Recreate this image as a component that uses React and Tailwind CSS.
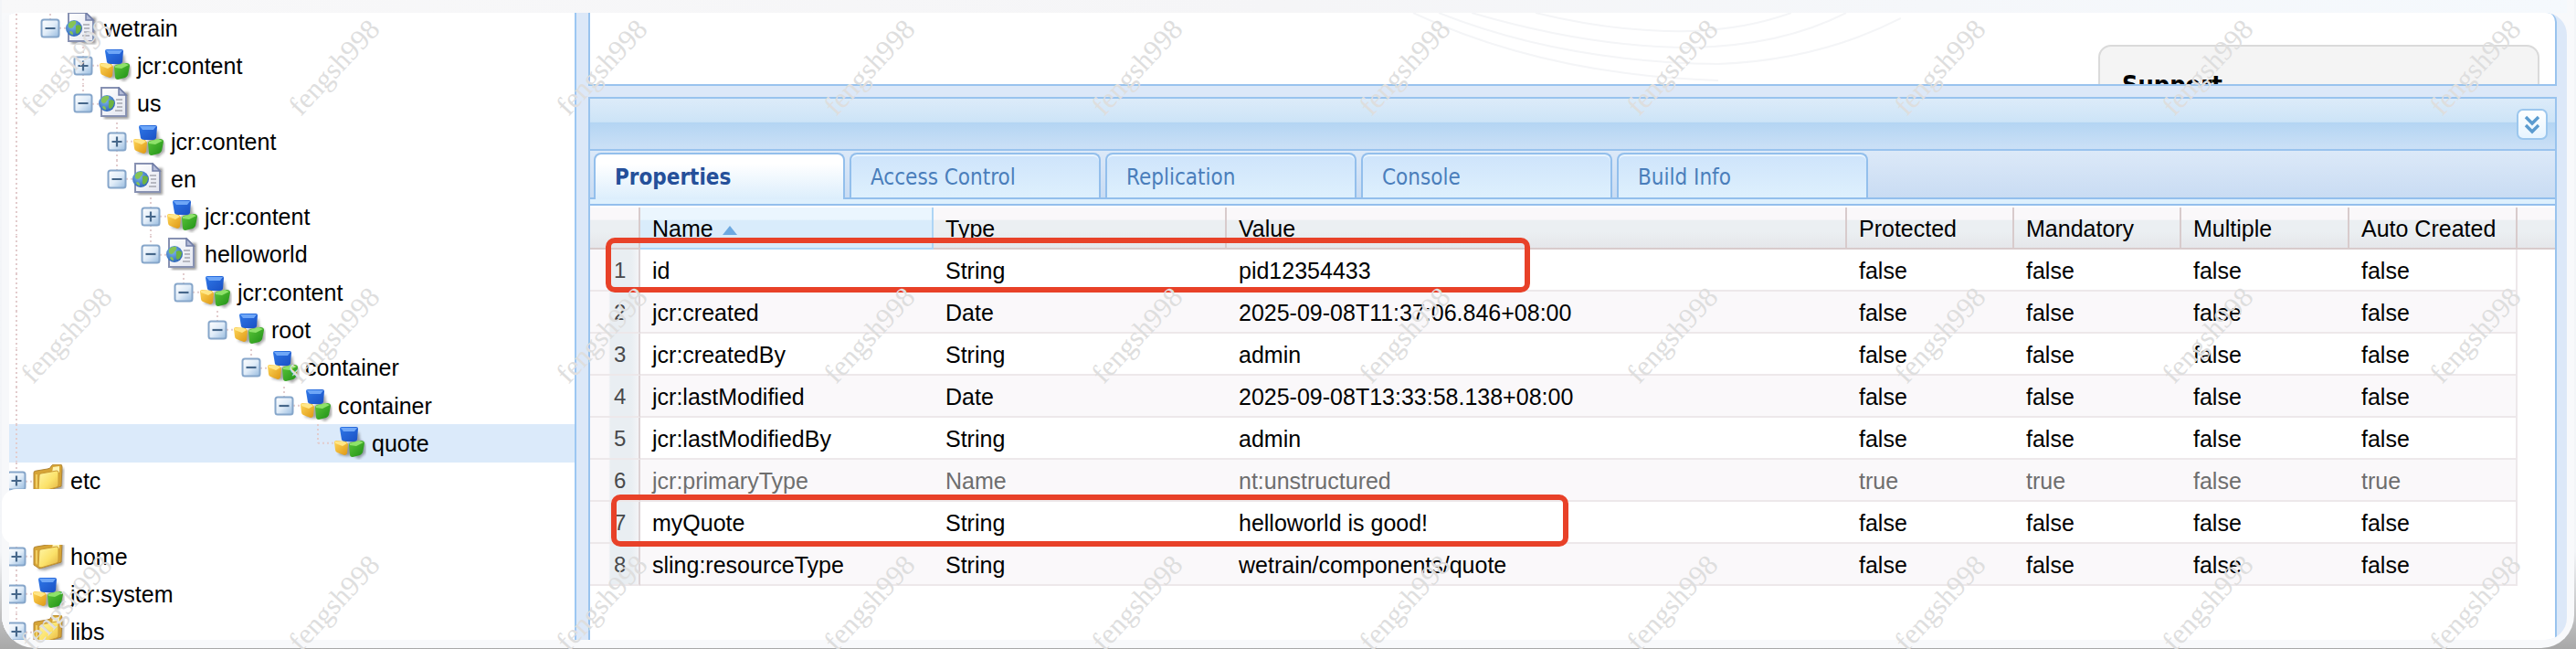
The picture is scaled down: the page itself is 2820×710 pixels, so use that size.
import React from "react";

const tree = [
  { label: "wetrain", level: 1, icon: "page", open: true, last: true },
  { label: "jcr:content", level: 2, icon: "cubes" },
  { label: "us", level: 2, icon: "page", open: true, last: true },
  { label: "jcr:content", level: 3, icon: "cubes" },
  { label: "en", level: 3, icon: "page", open: true, last: true },
  { label: "jcr:content", level: 4, icon: "cubes" },
  { label: "helloworld", level: 4, icon: "page", open: true, last: true },
  { label: "jcr:content", level: 5, icon: "cubes", open: true, last: true },
  { label: "root", level: 6, icon: "cubes", open: true, last: true },
  { label: "container", level: 7, icon: "cubes", open: true, last: true },
  { label: "container", level: 8, icon: "cubes", open: true, last: true },
  { label: "quote", level: 9, icon: "cubes", leaf: true, last: true, selected: true },
  { label: "etc", level: 0, icon: "folder" },
  { blank: true },
  { label: "home", level: 0, icon: "folder" },
  { label: "jcr:system", level: 0, icon: "cubes" },
  { label: "libs", level: 0, icon: "folder" },
];

const INDENT = [0, 37, 73, 110, 147, 183, 220, 257, 293, 330];

const rows = [
  ["id", "String", "pid12354433", "false", "false", "false", "false"],
  ["jcr:created", "Date", "2025-09-08T11:37:06.846+08:00", "false", "false", "false", "false"],
  ["jcr:createdBy", "String", "admin", "false", "false", "false", "false"],
  ["jcr:lastModified", "Date", "2025-09-08T13:33:58.138+08:00", "false", "false", "false", "false"],
  ["jcr:lastModifiedBy", "String", "admin", "false", "false", "false", "false"],
  ["jcr:primaryType", "Name", "nt:unstructured", "true", "true", "false", "true"],
  ["myQuote", "String", "helloworld is good!", "false", "false", "false", "false"],
  ["sling:resourceType", "String", "wetrain/components/quote", "false", "false", "false", "false"],
];

const columns = ["Name", "Type", "Value", "Protected", "Mandatory", "Multiple", "Auto Created"];
const tabs = ["Properties", "Access Control", "Replication", "Console", "Build Info"];

function Gradients() {
  return (
    <svg className="absolute h-0 w-0" aria-hidden="true">
      <defs>
        <linearGradient id="blue" x1="0" y1="0" x2="1" y2="1">
          <stop offset="0" stopColor="#2f78e8" />
          <stop offset="1" stopColor="#1a50c4" />
        </linearGradient>
        <linearGradient id="gold" x1="0" y1="0" x2="1" y2="1">
          <stop offset="0" stopColor="#ffd658" />
          <stop offset="1" stopColor="#dd9714" />
        </linearGradient>
        <linearGradient id="green" x1="0" y1="0" x2="1" y2="1">
          <stop offset="0" stopColor="#5cc63a" />
          <stop offset="1" stopColor="#1f9016" />
        </linearGradient>
        <linearGradient id="toggle" x1="0" y1="0" x2="1" y2="1">
          <stop offset="0" stopColor="#ffffff" />
          <stop offset="0.5" stopColor="#e0ecf8" />
          <stop offset="1" stopColor="#97bbdf" />
        </linearGradient>
        <linearGradient id="paper" x1="0" y1="0" x2="1" y2="1">
          <stop offset="0" stopColor="#ffffff" />
          <stop offset="1" stopColor="#e3e6f0" />
        </linearGradient>
        <linearGradient id="folder" x1="0" y1="0" x2="1" y2="1">
          <stop offset="0" stopColor="#fff6a8" />
          <stop offset="0.55" stopColor="#fbe26a" />
          <stop offset="1" stopColor="#e2b03f" />
        </linearGradient>
        <radialGradient id="globe" cx="0.4" cy="0.35" r="0.7">
          <stop offset="0" stopColor="#7fb6ea" />
          <stop offset="1" stopColor="#2a62b4" />
        </radialGradient>
        <filter id="soft" x="-30%" y="-30%" width="160%" height="160%">
          <feGaussianBlur stdDeviation="1.6" />
        </filter>
      </defs>
    </svg>
  );
}

function Cubes() {
  return (
    <svg className="h-9 w-9 shrink-0" viewBox="0 0 36 36" aria-hidden="true">
      <path d="M5 30 L14 32 L21 31 L28 35 L35 29 L35 19 L29 14 L28 5 Z" fill="#000" opacity="0.35" filter="url(#soft)" />
      <path d="M7 2 Q7 0 9 0 L25 0 Q27 0 27 2 L26 14 Q25 16 23 16 L12 16 Q10 16 9 14 Z" fill="url(#blue)" />
      <path d="M8 1 L26 1 L23 5 L11 5 Z" fill="#6ea6f7" />
      <path d="M1 17 Q1 15 3 15 L14 16 L16 19 L15 29 Q14 31 12 31 L4 28 Q2 27 2 25 Z" fill="url(#gold)" />
      <path d="M2 16 L12 16 L15 18 L10 21 L2 18 Z" fill="#ffe686" />
      <path d="M17 20 Q17 18 19 17 L30 15 Q34 15 34 18 L32 28 Q31 30 29 31 L21 33 Q18 33 18 30 Z" fill="url(#green)" />
      <path d="M18 18 L28 15 L33 17 L25 21 L18 20 Z" fill="#8ee26a" />
    </svg>
  );
}

function Page() {
  return (
    <svg className="h-9 w-9 shrink-0" viewBox="0 0 36 36" aria-hidden="true">
      <path d="M6 6 H33 V35 H6 Z" fill="#000" opacity="0.4" filter="url(#soft)" />
      <path d="M3 1 H22 L30 9 V32 H3 Z" fill="url(#paper)" stroke="#8791b2" strokeWidth="2" />
      <path d="M22 1 L22 9 L30 9 Z" fill="#b4bcd8" stroke="#727fa8" strokeWidth="1.5" />
      <path d="M19 14 H26 M20 18 H26 M20 22 H26 M18 26 H26" stroke="#a5a7b0" strokeWidth="1.6" />
      <circle cx="9" cy="18" r="9" fill="url(#globe)" />
      <path d="M3 13 Q6 9 11 10 Q12 13 9 15 Q8 18 5 18 Q2 17 3 13 Z" fill="#86c454" />
      <path d="M11 15 Q15 13 17 16 Q17 21 13 24 Q10 23 11 20 Z" fill="#6db340" />
      <path d="M5 21 Q8 21 8 25 Q5 25 4 22 Z" fill="#86c454" />
    </svg>
  );
}

function Folder() {
  return (
    <svg className="h-9 w-9 shrink-0" viewBox="0 0 36 36" aria-hidden="true">
      <path d="M6 32 L14 33 L34 27 L35 4 L28 6 Z" fill="#000" opacity="0.35" filter="url(#soft)" />
      <path d="M2 9 Q2 7 5 7 L17 5 L20 4 L21 2 Q22 0 25 0 L31 0 Q33 0 33 3 L32 24 L8 31 L2 27 Z" fill="#d6a436" stroke="#b08434" strokeWidth="1" />
      <path d="M23 3 L30 2 L30 9 L22 9 Z" fill="#fff3ae" />
      <path d="M8 12 Q8 10 10 10 L27 7 Q29 7 29 9 L29 22 Q29 24 27 25 L10 30 Q7 30 7 28 Z" fill="url(#folder)" stroke="#c99a35" strokeWidth="1" />
      <path d="M4 11 L6 11 L6 27 L4 25 Z" fill="#f1cf63" />
    </svg>
  );
}

function Toggle({ open, name }) {
  return (
    <button type="button" aria-label={`${open ? "Collapse" : "Expand"} ${name}`} className="relative h-[22px] w-[22px] shrink-0">
      <svg className="block h-[22px] w-[22px]" viewBox="0 0 22 22" aria-hidden="true">
        <rect x="1.5" y="1.5" width="19" height="19" rx="2.5" fill="url(#toggle)" stroke="#86a6ca" strokeWidth="2" />
        <path d={open ? "M5.5 11 H16.5" : "M5.5 11 H16.5 M11 5.5 V16.5"} stroke="#46678a" strokeWidth="2.2" />
      </svg>
    </button>
  );
}

const icons = { cubes: Cubes, page: Page, folder: Folder };

function Guides({ node }) {
  const x = 16 + INDENT[node.level];
  const line = { stroke: "#e2cccd", strokeWidth: 2, strokeDasharray: "2 3" };
  return (
    <svg className="absolute inset-0 h-full w-full" aria-hidden="true">
      {(node.level > 0 || !node.last) && <line x1="16" y1="0" x2="16" y2="100%" {...line} />}
      {node.level > 0 && <line x1={x} y1="0" x2={x} y2={node.last ? "50%" : "100%"} {...line} />}
      <line x1={x} y1="50%" x2={x + 18} y2="50%" {...line} />
    </svg>
  );
}

function TreeNode({ node }) {
  if (node.blank) {
    return (
      <li className="relative z-20 min-h-[41px] flex-1" aria-hidden="true">
        <span className="absolute -top-3 right-0 -bottom-2 left-0 rounded-l-2xl bg-white" />
      </li>
    );
  }
  const Icon = icons[node.icon];
  return (
    <li
      role="treeitem"
      aria-selected={Boolean(node.selected)}
      className={`relative flex min-h-[41px] flex-1 items-center ${node.selected ? "bg-[#dbeafa]" : ""}`}
    >
      <Guides node={node} />
      <span className="shrink-0" style={{ width: 5 + INDENT[node.level] }} />
      {node.leaf ? <span className="w-[22px] shrink-0" /> : <Toggle open={node.open} name={node.label} />}
      <span className="relative ml-[6px] flex items-center gap-[6px]">
        <Icon />
        <span className="text-[25px] leading-[40px] whitespace-nowrap">{node.label}</span>
      </span>
    </li>
  );
}

function WelcomePanel() {
  return (
    <section className="relative flex h-20 justify-end overflow-hidden rounded-tr-[10px] border-x-2 border-b-2 border-[#99c3ee] bg-white pr-[17px]">
      <svg className="absolute top-0 left-[895px] h-20 w-[540px]" viewBox="0 0 540 80" fill="none" stroke="#f4f5f7" strokeWidth="2" aria-hidden="true">
        <path d="M6 0 Q150 68 340 74" />
        <path d="M34 0 Q170 54 340 56 Q450 52 540 6" />
        <path d="M70 0 Q200 38 310 38 Q410 36 480 0" />
        <path d="M140 0 Q230 22 310 20 Q370 18 420 0" />
      </svg>
      <div className="relative mt-[35px] h-[90px] w-[483px] rounded-t-[14px] border-2 border-[#dadada] bg-[#f4f4f4] pt-6 pl-6">
        <h2 className="font-['DejaVu_Sans_Condensed','DejaVu_Sans',sans-serif] text-[27px] leading-[36px] font-bold">Support</h2>
      </div>
    </section>
  );
}

function TabBar() {
  return (
    <div className="border-b-2 border-[#93bfec] bg-[#def0fd] pb-[5px]">
      <div role="tablist" className="flex gap-[5px] border-b-2 border-[#93bfec] bg-linear-to-b from-[#dce9f8] to-[#c9dcf3] pt-[2px] pl-[4px]">
        {tabs.map((tab, i) => (
          <button
            key={tab}
            type="button"
            role="tab"
            aria-selected={i === 0}
            className={`w-[275px] rounded-t-[8px] border-x-2 border-t-2 border-[#93bfec] pt-[3px] pl-[21px] text-left font-['DejaVu_Sans_Condensed','DejaVu_Sans',sans-serif] text-[24px] leading-[44px] ${
              i === 0
                ? "-mb-[2px] h-[51px] bg-linear-to-b from-white from-20% to-[#dceefc] pb-[2px] font-bold text-[#25509a]"
                : "h-[49px] bg-linear-to-b from-[#cee4fb] to-[#def0fd] text-[#4a7ebb] shadow-[inset_0_2px_0_#e8f5ff]"
            }`}
          >
            {tab}
          </button>
        ))}
      </div>
    </div>
  );
}

const HEAD_BG = "bg-[linear-gradient(to_bottom,#faf8fa_30%,#ebeff2_32%,#ebeff2_60%,#e5e6ea)]";

function PropertiesTable() {
  return (
    <table className="w-full table-fixed border-separate border-spacing-0 text-left text-[25px]">
      <colgroup>
        <col className="w-[55px]" />
        <col className="w-[321px]" />
        <col className="w-[321px]" />
        <col />
        <col className="w-[183px]" />
        <col className="w-[183px]" />
        <col className="w-[184px]" />
        <col className="w-[184px]" />
        <col className="w-[41px]" />
      </colgroup>
      <thead>
        <tr className="h-[46px]">
          <th className={`border-r-2 border-b-2 border-[#d8cbcc] p-0 ${HEAD_BG}`} />
          {columns.map((c, i) => (
            <th
              key={c}
              scope="col"
              aria-sort={i === 0 ? "ascending" : undefined}
              className={`border-r-2 border-b-2 pt-[2px] pr-0 pb-0 pl-[13px] leading-[42px] font-normal whitespace-nowrap ${
                i === 0
                  ? "border-[#aed5f5] bg-[linear-gradient(to_bottom,#ebf6fe_30%,#d9ecfb_32%)]"
                  : `border-[#d8cbcc] ${HEAD_BG}`
              }`}
            >
              <span className="flex items-center gap-[10px]">
                {c}
                {i === 0 && (
                  <svg className="mt-1 h-[10px] w-4" viewBox="0 0 16 10" aria-hidden="true">
                    <path d="M8 0 L16 10 H0 Z" fill="#6ea9e0" />
                  </svg>
                )}
              </span>
            </th>
          ))}
          <th className={`border-b-2 border-[#d8cbcc] p-0 ${HEAD_BG}`} />
        </tr>
      </thead>
      <tbody>
        {rows.map((r, n) => (
          <tr key={r[0]} className={`h-[46px] ${r[0] === "jcr:primaryType" ? "text-[#6e6e6e]" : ""}`}>
            <td className="border-r-2 border-b-2 border-r-[#ddd3d5] border-b-[#ede8ea] bg-[linear-gradient(to_right,#faf8fa_38%,#e9eef2_42%,#e9eef2_85%,#f3f4f7)] pt-[2px] pr-0 pb-0 pl-[26px] text-[24px] leading-[42px] text-[#48494b]">
              {n + 1}
            </td>
            {r.map((v, i) => (
              <td
                key={i}
                className={`border-b-2 border-[#ede8ea] pt-[2px] pr-0 pb-0 pl-[13px] leading-[42px] whitespace-nowrap ${n % 2 ? "bg-[#faf8fa]" : "bg-white"} ${
                  i === r.length - 1 ? "border-r-2" : ""
                }`}
              >
                {v}
              </td>
            ))}
            <td className="p-0" />
          </tr>
        ))}
      </tbody>
    </table>
  );
}

function Watermark() {
  return (
    <div className="pointer-events-none absolute -top-[73px] -left-[74px] z-40 grid w-[2930px] grid-cols-10" aria-hidden="true">
      {Array.from({ length: 30 }, (_, i) => (
        <span key={i} className="flex h-[293px] items-center justify-center">
          <span className="-rotate-[47deg] font-['Liberation_Serif',serif] text-[31px] leading-none text-[#dedede]">fengsh998</span>
        </span>
      ))}
    </div>
  );
}

export default function App() {
  return (
    <div className="relative flex h-screen min-h-[710px] flex-col overflow-hidden bg-linear-to-b from-[#f3f5f8] from-85% to-[#a8a8a8] px-[2px] pb-px font-['Liberation_Sans',Arial,sans-serif] text-black">
      <Gradients />
      <div className="flex flex-1 flex-col overflow-hidden rounded-b-[36px] bg-[#f8f9fb] pr-[8px] pb-[9px]">
        <div className="relative z-10 h-[14px] shrink-0 bg-linear-to-r from-[#f8f8f9] via-[#f5f5f7] to-[#f5f9fd]" />
        <main className="flex min-h-0 flex-1 overflow-hidden rounded-tl-[16px] rounded-tr-[24px] rounded-br-[24px] bg-[#dce8f8]">
          <nav className="relative flex w-[627px] shrink-0 flex-col bg-white" aria-label="Repository">
            <span className="absolute inset-y-0 left-0 z-10 w-2 bg-[#f7f8fa]" />
            <ul role="tree" className="-mt-[4px] -mb-[12px] flex flex-1 flex-col">
              {tree.map((node, i) => (
                <TreeNode key={i} node={node} />
              ))}
            </ul>
          </nav>
          <div className="w-[15px] shrink-0 border-l-2 border-[#9cc7f2]" />
          <div className="mr-[11px] flex min-w-0 flex-1 flex-col">
            <WelcomePanel />
            <section className="relative mt-3 flex-1 border-x-2 border-t-2 border-[#99c3ee] bg-white">
              <header className="flex h-[57px] items-center justify-end border-b-2 border-[#99c3ee] bg-[linear-gradient(to_bottom,#dcebf9,#cde4f7_46%,#b4d5f3_48%,#cbe0f6)] pr-2">
                <button type="button" aria-label="Collapse panel" className="flex h-[34px] w-[34px] items-center justify-center rounded-[7px] border-2 border-[#9cc7ee] bg-linear-to-b from-white to-[#e6f4ff]">
                  <svg className="h-6 w-6" viewBox="0 0 24 24" fill="none" stroke="#5b9bcf" strokeWidth="3.4" aria-hidden="true">
                    <path d="M5 4 L12 11 L19 4" />
                    <path d="M5 13 L12 20 L19 13" />
                  </svg>
                </button>
              </header>
              <TabBar />
              <div className="relative pt-[2px]">
                <PropertiesTable />
                <div className="pointer-events-none absolute top-[35px] left-[17px] h-[60px] w-[1012px] rounded-[10px] border-[6px] border-[#e84128]" />
                <div className="pointer-events-none absolute top-[316px] left-[23px] h-[57px] w-[1048px] rounded-[10px] border-[6px] border-[#e84128]" />
              </div>
            </section>
          </div>
        </main>
      </div>
      <Watermark />
    </div>
  );
}
